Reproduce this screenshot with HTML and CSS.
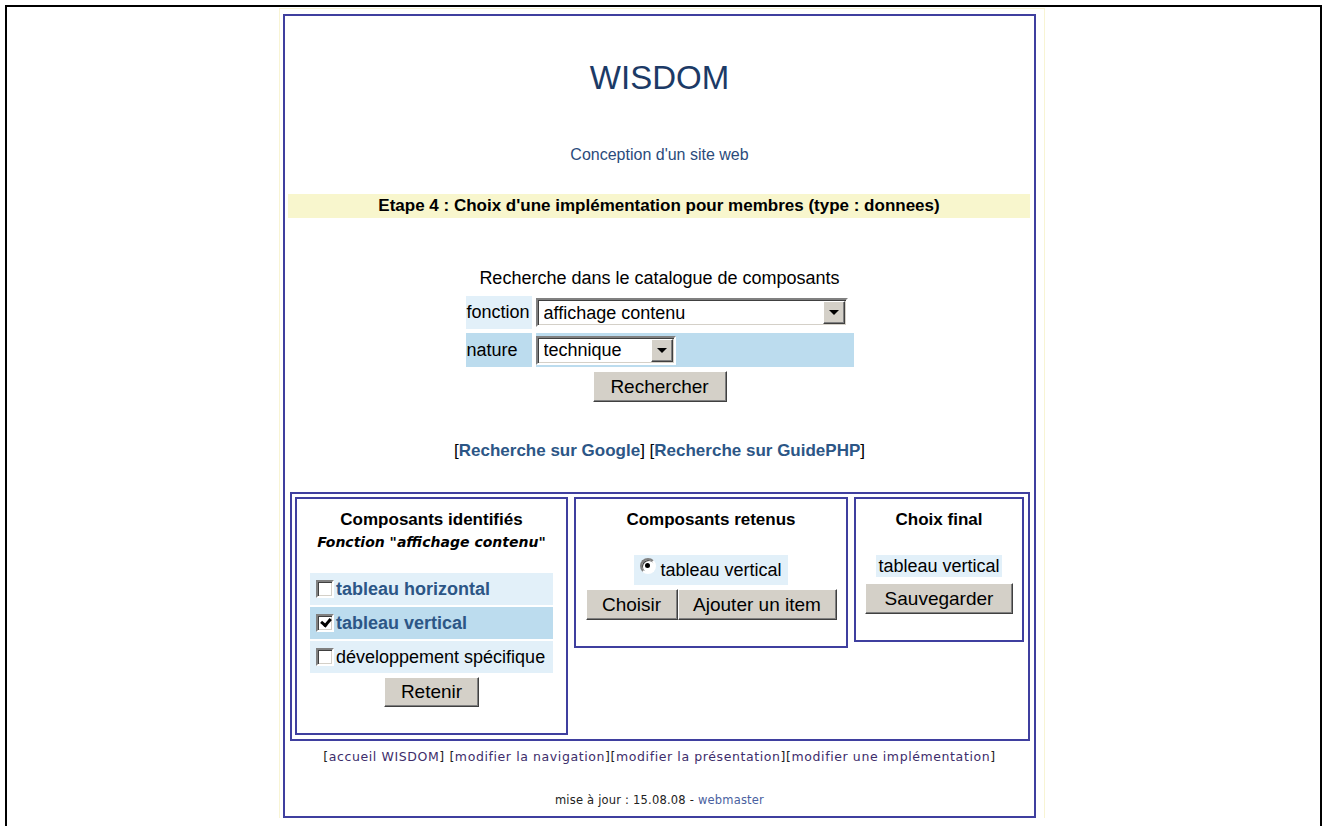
FILE: index.html
```html
<!DOCTYPE html>
<html>
<head lang="fr">
    <meta charset="UTF-8">
    <title>WISDOM - Conception d'un site web</title>
    <link rel="stylesheet" href="styles.css">
</head>
<body>
<div id="frame">
    <div id="page">
        <div id="main">
            <h1 class="title">WISDOM</h1>
            <h2 class="subtitle">Conception d'un site web</h2>
            <div class="etape">Etape 4 : Choix d'une implémentation pour membres (type : donnees)</div>

            <div class="search">
                <p class="search-title">Recherche dans le catalogue de composants</p>
                <div class="search-grid">
                    <div class="lbl light">fonction</div>
                    <div class="cell">
                        <span class="combo combo-wide">
                            <select><option>affichage contenu</option></select>
                            <span class="drop"></span>
                        </span>
                    </div>
                    <div class="lbl dark">nature</div>
                    <div class="cell dark">
                        <span class="combo combo-small">
                            <select><option>technique</option></select>
                            <span class="drop"></span>
                        </span>
                    </div>
                </div>
                <button class="btn btn-search">Rechercher</button>
            </div>

            <p class="ext">[<a href="#">Recherche sur Google</a>] [<a href="#">Recherche sur GuidePHP</a>]</p>

            <div class="choices">
                <div class="box box-ident">
                    <div class="box-title">Composants identifiés</div>
                    <div class="box-sub">Fonction "affichage contenu"</div>
                    <div class="checks">
                        <label class="check light"><input type="checkbox"><a href="#">tableau horizontal</a></label>
                        <label class="check dark"><input type="checkbox" checked><a href="#">tableau vertical</a></label>
                        <label class="check light"><input type="checkbox"><span>développement spécifique</span></label>
                    </div>
                    <button class="btn btn-retenir">Retenir</button>
                </div>
                <div class="box box-retenus">
                    <div class="box-title">Composants retenus</div>
                    <label class="radio-row"><input type="radio" checked> tableau vertical</label>
                    <div class="btn-pair">
                        <button class="btn btn-choisir">Choisir</button><button class="btn btn-ajouter">Ajouter un item</button>
                    </div>
                </div>
                <div class="box box-final">
                    <div class="box-title">Choix final</div>
                    <div class="final-item">tableau vertical</div>
                    <button class="btn btn-save">Sauvegarder</button>
                </div>
            </div>

            <p class="footer-nav">[<a href="#">accueil WISDOM</a>] [<a href="#">modifier la navigation</a>][<a href="#">modifier la présentation</a>][<a href="#">modifier une implémentation</a>]</p>
            <p class="footer-date">mise à jour : 15.08.08 - <a href="#">webmaster</a></p>
        </div>
    </div>
</div>
</body>
</html>
```

FILE: styles.css
```css
* {
    margin: 0;
    padding: 0;
}

body {
    background: #fff;
    font-family: "Liberation Sans", Arial, sans-serif;
    color: #000;
}

a {
    text-decoration: none;
}

#frame {
    height: 821px;
    margin: 5px 2px 0 5px;
    border: 2px solid #000;
    border-bottom: 0;
    box-sizing: border-box;
    overflow: hidden;
}

#page {
    width: 753px;
    margin: 1px 0 0 272px;
    padding: 5px 8px 0 3px;
    border: 1px solid #f8f4d4;
    border-bottom: 0;
}

#main {
    border: 2px solid #3f3f9f;
    padding-bottom: 8px;
    text-align: center;
}

.title {
    margin-top: 42px;
    font-size: 33px;
    line-height: 40px;
    font-weight: normal;
    color: #1c3a66;
}

.subtitle {
    margin-top: 45px;
    font-size: 16px;
    line-height: 24px;
    font-weight: normal;
    color: #2b4b7b;
}

.etape {
    margin: 27px 4px 0 3px;
    height: 24px;
    line-height: 24px;
    background: #f8f6cd;
    font-size: 17px;
    font-weight: bold;
}

.search-title {
    margin-top: 49px;
    font-size: 18px;
    line-height: 22px;
}

.search-grid {
    width: 388px;
    margin: 7px auto 0;
    display: grid;
    grid-template-columns: 66px 1fr;
    grid-template-rows: 33px 34px;
    gap: 4px;
    text-align: left;
}

.lbl {
    font-size: 18px;
    padding-left: 1px;
    display: flex;
    align-items: center;
}

.light {
    background: #e2f0f9;
}

.dark {
    background: #bcdcee;
}

.cell {
    display: flex;
    align-items: center;
}

.combo {
    display: inline-block;
    position: relative;
    height: 29px;
}

.combo-wide {
    width: 312px;
}

.combo-small {
    width: 140px;
}

.combo select {
    -webkit-appearance: none;
    appearance: none;
    width: 100%;
    height: 29px;
    padding: 0 6px;
    background: #fff;
    border: 2px solid;
    border-color: #808080 #fff #fff #808080;
    box-shadow: inset 1px 1px #404040, inset -1px -1px #d4d0c8;
    font-family: "Liberation Sans", Arial, sans-serif;
    font-size: 18px;
    color: #000;
    outline: none;
}

.drop {
    position: absolute;
    right: 3px;
    top: 3px;
    width: 20px;
    height: 21px;
    background: #d4d0c8;
    border: 1px solid;
    border-color: #fff #404040 #404040 #fff;
    box-shadow: inset -1px -1px #808080;
}

.drop::after {
    content: "";
    position: absolute;
    left: 5px;
    top: 8px;
    border-left: 5px solid transparent;
    border-right: 5px solid transparent;
    border-top: 5px solid #000;
}

.btn {
    background: #d4d0c8;
    border: 1px solid;
    border-color: #fff #404040 #404040 #fff;
    box-shadow: inset -1px -1px #808080;
    font-family: "Liberation Sans", Arial, sans-serif;
    font-size: 19px;
    color: #000;
    cursor: pointer;
}

.btn-search {
    width: 134px;
    height: 31px;
    margin-top: 4px;
}

.ext {
    margin-top: 38px;
    font-size: 17px;
    line-height: 22px;
    color: #000;
}

.ext a {
    font-weight: bold;
    color: #2c5686;
}

.choices {
    margin: 30px 4px 0 5px;
    padding: 3px 4px 4px 3px;
    border: 2px solid #3f3f9f;
    display: flex;
    align-items: flex-start;
    gap: 6px;
}

.box {
    border: 2px solid #3f3f9f;
    padding: 10px 0 26px;
    box-sizing: border-box;
}

.box-ident {
    width: 273px;
}

.box-retenus {
    width: 274px;
}

.box-final {
    width: 170px;
}

.box-title {
    font-size: 17px;
    line-height: 22px;
    font-weight: bold;
}

.box-sub {
    margin-top: 3px;
    font-family: "DejaVu Sans", Verdana, sans-serif;
    font-size: 14px;
    line-height: 16px;
    font-weight: bold;
    font-style: italic;
}

.checks {
    width: 243px;
    margin: 23px auto 0;
    display: flex;
    flex-direction: column;
    gap: 2px;
    text-align: left;
}

.check {
    height: 32px;
    display: flex;
    align-items: center;
    font-size: 18px;
}

.check a {
    font-weight: bold;
    color: #2c5686;
}

.check input {
    -webkit-appearance: none;
    appearance: none;
    width: 18px;
    height: 18px;
    margin: 0 2px 0 6px;
    background: #fff;
    border: 2px solid;
    border-color: #808080 #fff #fff #808080;
    box-shadow: inset 1px 1px #404040, inset -1px -1px #d4d0c8;
    box-sizing: border-box;
    position: relative;
}

.check input:checked::after {
    content: "";
    position: absolute;
    left: 3px;
    top: 2px;
    width: 7px;
    height: 4px;
    border-left: 3px solid #000;
    border-bottom: 3px solid #000;
    transform: rotate(-50deg);
}

.btn-retenir {
    width: 95px;
    height: 30px;
    margin-top: 4px;
}

.radio-row {
    width: 154px;
    height: 30px;
    margin: 24px auto 0;
    display: flex;
    align-items: center;
    justify-content: center;
    gap: 4px;
    background: #e2f0f9;
    font-size: 18px;
}

.radio-row input {
    -webkit-appearance: none;
    appearance: none;
    width: 16px;
    height: 16px;
    border-radius: 50%;
    background: #fff;
    border: 2px solid;
    border-color: #808080 #fff #fff #808080;
    box-shadow: inset 1px 1px #404040;
    box-sizing: border-box;
    position: relative;
    top: -4px;
}

.radio-row input:checked::after {
    content: "";
    position: absolute;
    left: 3px;
    top: 3px;
    width: 5px;
    height: 5px;
    border-radius: 50%;
    background: #000;
}

.btn-pair {
    margin-top: 4px;
    display: flex;
    justify-content: center;
}

.btn-choisir {
    width: 92px;
    height: 31px;
}

.btn-ajouter {
    width: 159px;
    height: 31px;
}

.final-item {
    width: 126px;
    height: 22px;
    margin: 24px auto 0;
    background: #e2f0f9;
    font-size: 18px;
    line-height: 22px;
}

.btn-save {
    width: 148px;
    height: 31px;
    margin-top: 6px;
}

.footer-nav {
    margin-top: 8px;
    font-family: "DejaVu Sans", Verdana, sans-serif;
    font-size: 12.5px;
    letter-spacing: 0.6px;
    line-height: 16px;
    color: #222;
}

.footer-nav a {
    color: #3d2d6b;
}

.footer-date {
    margin-top: 27px;
    font-family: "DejaVu Sans", Verdana, sans-serif;
    font-size: 11.5px;
    letter-spacing: 0.2px;
    line-height: 16px;
    color: #222;
}

.footer-date a {
    color: #4a5fa0;
}
```
